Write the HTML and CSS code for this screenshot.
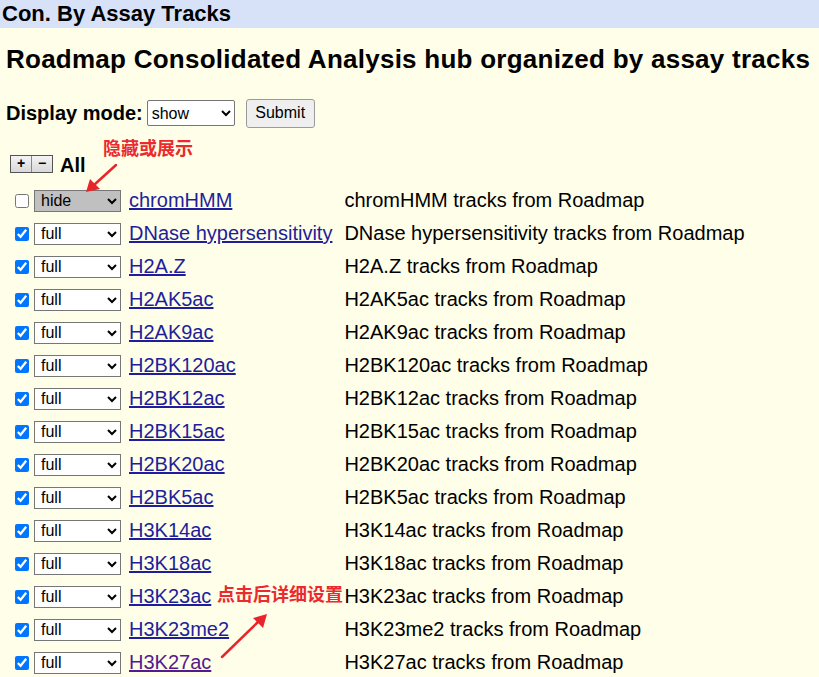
FILE: index.html
```html
<!DOCTYPE html>
<html>
<head>
<meta charset="utf-8">
<link rel="stylesheet" href="styles.css">
</head>
<body>
<div class="topbar">Con. By Assay Tracks</div>
<div class="content">
  <h1 class="title">Roadmap Consolidated Analysis hub organized by assay tracks</h1>
  <div class="mode">
    <span class="mode-label">Display mode:</span>
    <select class="mode-select"><option>show</option><option>hide</option></select>
    <button class="submit">Submit</button>
  </div>
  <div class="allrow">
    <span class="pm"><span class="pmbtn">+</span><span class="pmbtn">−</span></span>
    <span class="all">All</span>
  </div>
  <table class="tracks">
    <tr><td class="ctl"><input type="checkbox"><select class="vis hide"><option>hide</option></select></td><td class="name"><a href="#">chromHMM</a></td><td class="desc">chromHMM tracks from Roadmap</td></tr>
    <tr><td class="ctl"><input type="checkbox" checked><select class="vis"><option>full</option></select></td><td class="name"><a href="#">DNase hypersensitivity</a></td><td class="desc">DNase hypersensitivity tracks from Roadmap</td></tr>
    <tr><td class="ctl"><input type="checkbox" checked><select class="vis"><option>full</option></select></td><td class="name"><a href="#">H2A.Z</a></td><td class="desc">H2A.Z tracks from Roadmap</td></tr>
    <tr><td class="ctl"><input type="checkbox" checked><select class="vis"><option>full</option></select></td><td class="name"><a href="#">H2AK5ac</a></td><td class="desc">H2AK5ac tracks from Roadmap</td></tr>
    <tr><td class="ctl"><input type="checkbox" checked><select class="vis"><option>full</option></select></td><td class="name"><a href="#">H2AK9ac</a></td><td class="desc">H2AK9ac tracks from Roadmap</td></tr>
    <tr><td class="ctl"><input type="checkbox" checked><select class="vis"><option>full</option></select></td><td class="name"><a href="#">H2BK120ac</a></td><td class="desc">H2BK120ac tracks from Roadmap</td></tr>
    <tr><td class="ctl"><input type="checkbox" checked><select class="vis"><option>full</option></select></td><td class="name"><a href="#">H2BK12ac</a></td><td class="desc">H2BK12ac tracks from Roadmap</td></tr>
    <tr><td class="ctl"><input type="checkbox" checked><select class="vis"><option>full</option></select></td><td class="name"><a href="#">H2BK15ac</a></td><td class="desc">H2BK15ac tracks from Roadmap</td></tr>
    <tr><td class="ctl"><input type="checkbox" checked><select class="vis"><option>full</option></select></td><td class="name"><a href="#">H2BK20ac</a></td><td class="desc">H2BK20ac tracks from Roadmap</td></tr>
    <tr><td class="ctl"><input type="checkbox" checked><select class="vis"><option>full</option></select></td><td class="name"><a href="#">H2BK5ac</a></td><td class="desc">H2BK5ac tracks from Roadmap</td></tr>
    <tr><td class="ctl"><input type="checkbox" checked><select class="vis"><option>full</option></select></td><td class="name"><a href="#">H3K14ac</a></td><td class="desc">H3K14ac tracks from Roadmap</td></tr>
    <tr><td class="ctl"><input type="checkbox" checked><select class="vis"><option>full</option></select></td><td class="name"><a href="#">H3K18ac</a></td><td class="desc">H3K18ac tracks from Roadmap</td></tr>
    <tr><td class="ctl"><input type="checkbox" checked><select class="vis"><option>full</option></select></td><td class="name"><a href="#">H3K23ac</a></td><td class="desc">H3K23ac tracks from Roadmap</td></tr>
    <tr><td class="ctl"><input type="checkbox" checked><select class="vis"><option>full</option></select></td><td class="name"><a href="#">H3K23me2</a></td><td class="desc">H3K23me2 tracks from Roadmap</td></tr>
    <tr><td class="ctl"><input type="checkbox" checked><select class="vis"><option>full</option></select></td><td class="name"><a href="#" class="visited">H3K27ac</a></td><td class="desc">H3K27ac tracks from Roadmap</td></tr>
  </table>
</div>

<div class="note note1">隐藏或展示</div>
<div class="note note2">点击后详细设置</div>
<svg class="arrows" width="819" height="677" viewBox="0 0 819 677">
  <line x1="116" y1="165" x2="94" y2="185" stroke="#e8252a" stroke-width="2.5" stroke-linecap="round"/>
  <polygon points="86,192 90,179 100,189" fill="#e8252a"/>
  <line x1="222" y1="657" x2="259" y2="621" stroke="#e8252a" stroke-width="2.5" stroke-linecap="round"/>
  <polygon points="267,614 253,618 263,628" fill="#e8252a"/>
</svg>
</body>
</html>
```

FILE: styles.css
```css
html, body {
  margin: 0;
  padding: 0;
}
body {
  background: #fffee8;
  font-family: "Liberation Sans", Arial, sans-serif;
  color: #000;
  width: 819px;
  height: 677px;
  overflow: hidden;
  position: relative;
}
.topbar {
  background: #d7e2f8;
  height: 28px;
  line-height: 28px;
  font-size: 22px;
  font-weight: bold;
  padding-left: 2px;
}
.content {
  padding-left: 6px;
}
.title {
  font-size: 26px;
  letter-spacing: 0.25px;
  font-weight: bold;
  margin: 16px 0 0 0;
  line-height: 30px;
  white-space: nowrap;
}
.mode {
  display: flex;
  align-items: center;
  margin-top: 24px;
  height: 30px;
}
.mode-label {
  font-size: 20px;
  font-weight: bold;
}
.mode-select {
  margin-left: 4px;
  width: 88px;
  height: 26px;
  font-size: 16px;
  font-family: "Liberation Sans", Arial, sans-serif;
  background: #fff;
  border: 1px solid #767676;
  border-radius: 2px;
}
.submit {
  margin-left: 11px;
  height: 29px;
  width: 69px;
  font-size: 16px;
  font-family: "Liberation Sans", Arial, sans-serif;
  background: #efefef;
  border: 1px solid #9a9a9a;
  border-radius: 3px;
  padding: 0;
}
.allrow {
  display: flex;
  align-items: flex-end;
  margin-top: 21px;
  padding-left: 4px;
  height: 28px;
}
.pm {
  display: flex;
  border: 1px solid #555;
  margin-bottom: 4px;
}
.pmbtn {
  width: 20px;
  height: 16px;
  line-height: 15px;
  text-align: center;
  font-size: 14px;
  font-weight: bold;
  background: linear-gradient(#f4f4f4, #d8d8d8);
  border-right: 1px solid #888;
}
.pmbtn:last-child {
  border-right: none;
}
.all {
  font-size: 20px;
  font-weight: bold;
  margin-left: 7px;
  margin-bottom: 0px;
}
.tracks {
  border-collapse: collapse;
  margin-top: 7px;
  margin-left: 6px;
}
.tracks td {
  padding: 0;
  height: 33px;
  vertical-align: middle;
  font-size: 20px;
  white-space: nowrap;
}
.ctl {
  display: flex;
  align-items: center;
  height: 33px;
}
.ctl input {
  margin: 0 5px 0 3px;
  width: 14px;
  height: 14px;
  accent-color: #0075ff;
}
.vis {
  width: 87px;
  height: 22px;
  font-size: 16px;
  font-family: "Liberation Sans", Arial, sans-serif;
  background: #fff;
  border: 1px solid #767676;
  border-radius: 0;
  padding: 0 2px;
}
.vis.hide {
  background: #c0c0c0;
}
.name {
  padding-left: 8px !important;
  padding-right: 12px !important;
}
.name a {
  color: #1e1e9c;
}
.name a.visited {
  color: #551a8b;
}
.desc {
  padding-left: 0;
}
.note {
  position: absolute;
  color: #ea2a2e;
  font-family: "Noto Sans CJK SC", sans-serif;
  font-weight: bold;
  font-size: 18px;
  line-height: 22px;
}
.note1 {
  left: 103px;
  top: 136px;
}
.note2 {
  left: 217px;
  top: 582px;
}
.arrows {
  position: absolute;
  left: 0;
  top: 0;
  pointer-events: none;
}
```
